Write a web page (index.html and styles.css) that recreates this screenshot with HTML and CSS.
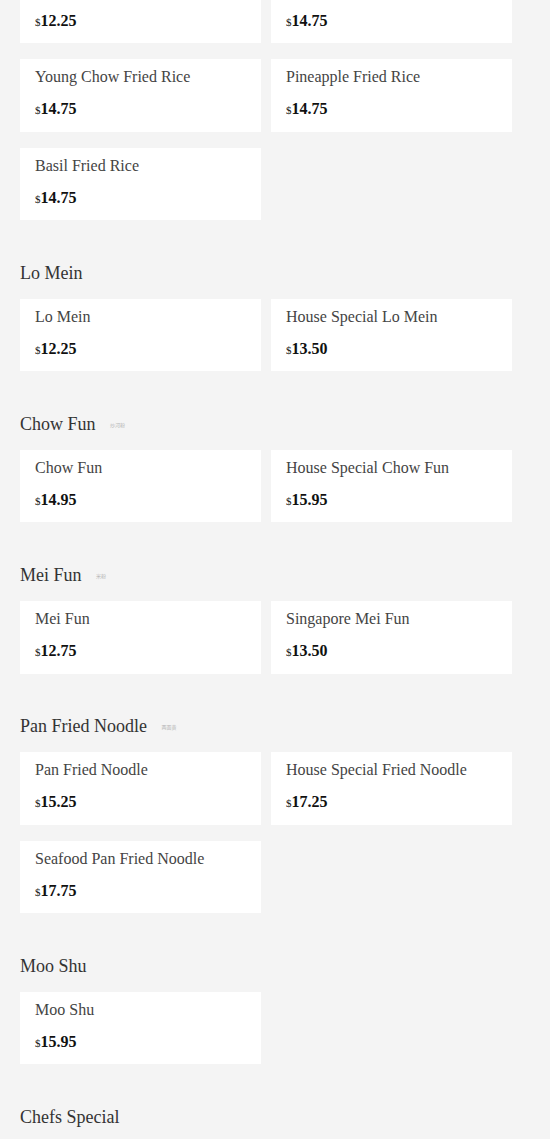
FILE: index.html
```html
<!DOCTYPE html>
<html lang="en">
<head>
<meta charset="utf-8">
<title>Menu</title>
<link rel="stylesheet" href="styles.css">
</head>
<body>
<main class="menu">
  <section class="section">
    <h2 class="section-title">Fried Rice</h2>
    <div class="grid">
      <div class="card"><div class="name">Vegetable Fried Rice</div><div class="price"><span class="cur">$</span>12.25</div></div>
      <div class="card"><div class="name">House Special Fried Rice</div><div class="price"><span class="cur">$</span>14.75</div></div>
      <div class="card"><div class="name">Young Chow Fried Rice</div><div class="price"><span class="cur">$</span>14.75</div></div>
      <div class="card"><div class="name">Pineapple Fried Rice</div><div class="price"><span class="cur">$</span>14.75</div></div>
      <div class="card"><div class="name">Basil Fried Rice</div><div class="price"><span class="cur">$</span>14.75</div></div>
    </div>
  </section>
  <section class="section">
    <h2 class="section-title">Lo Mein</h2>
    <div class="grid">
      <div class="card"><div class="name">Lo Mein</div><div class="price"><span class="cur">$</span>12.25</div></div>
      <div class="card"><div class="name">House Special Lo Mein</div><div class="price"><span class="cur">$</span>13.50</div></div>
    </div>
  </section>
  <section class="section">
    <h2 class="section-title">Chow Fun <span class="alt">炒河粉</span></h2>
    <div class="grid">
      <div class="card"><div class="name">Chow Fun</div><div class="price"><span class="cur">$</span>14.95</div></div>
      <div class="card"><div class="name">House Special Chow Fun</div><div class="price"><span class="cur">$</span>15.95</div></div>
    </div>
  </section>
  <section class="section">
    <h2 class="section-title">Mei Fun <span class="alt">米粉</span></h2>
    <div class="grid">
      <div class="card"><div class="name">Mei Fun</div><div class="price"><span class="cur">$</span>12.75</div></div>
      <div class="card"><div class="name">Singapore Mei Fun</div><div class="price"><span class="cur">$</span>13.50</div></div>
    </div>
  </section>
  <section class="section">
    <h2 class="section-title">Pan Fried Noodle <span class="alt">两面黄</span></h2>
    <div class="grid">
      <div class="card"><div class="name">Pan Fried Noodle</div><div class="price"><span class="cur">$</span>15.25</div></div>
      <div class="card"><div class="name">House Special Fried Noodle</div><div class="price"><span class="cur">$</span>17.25</div></div>
      <div class="card"><div class="name">Seafood Pan Fried Noodle</div><div class="price"><span class="cur">$</span>17.75</div></div>
    </div>
  </section>
  <section class="section">
    <h2 class="section-title">Moo Shu</h2>
    <div class="grid">
      <div class="card"><div class="name">Moo Shu</div><div class="price"><span class="cur">$</span>15.95</div></div>
    </div>
  </section>
  <section class="section">
    <h2 class="section-title">Chefs Special</h2>
    <div class="grid">
      <div class="card"><div class="name">General Tso's Chicken</div><div class="price"><span class="cur">$</span>16.95</div></div>
      <div class="card"><div class="name">Sesame Chicken</div><div class="price"><span class="cur">$</span>16.95</div></div>
    </div>
  </section>
</main>
</body>
</html>
```

FILE: styles.css
```css
html, body {
  margin: 0;
  padding: 0;
  background: #f4f4f4;
}

body {
  font-family: "Liberation Serif", "Times New Roman", "Noto Sans CJK SC", serif;
  color: #333;
}

.menu {
  padding: 0 20px;
  margin-top: -67.5px;
}

.section + .section {
  margin-top: 40.7px;
}

.section-title {
  margin: 0 0 14px;
  height: 24px;
  font-size: 18px;
  line-height: 24px;
  font-weight: normal;
  color: #333;
}

.alt {
  margin-left: 10px;
  font-family: "Noto Sans CJK SC", sans-serif;
  font-size: 5px;
  line-height: 0;
  color: #b5b5b5;
  vertical-align: 3px;
}

.grid {
  display: grid;
  grid-template-columns: 241px 241px;
  column-gap: 10px;
  row-gap: 16px;
}

.card {
  background: #fff;
  padding: 9px 15px 12.5px;
}

.name {
  height: 18px;
  font-size: 16px;
  line-height: 18px;
  color: #444;
  white-space: nowrap;
}

.price {
  margin-top: 13px;
  height: 20px;
  font-size: 16px;
  line-height: 20px;
  font-weight: bold;
  color: #111;
}

.cur {
  font-size: 11px;
  line-height: 0;
  font-weight: normal;
}
```
